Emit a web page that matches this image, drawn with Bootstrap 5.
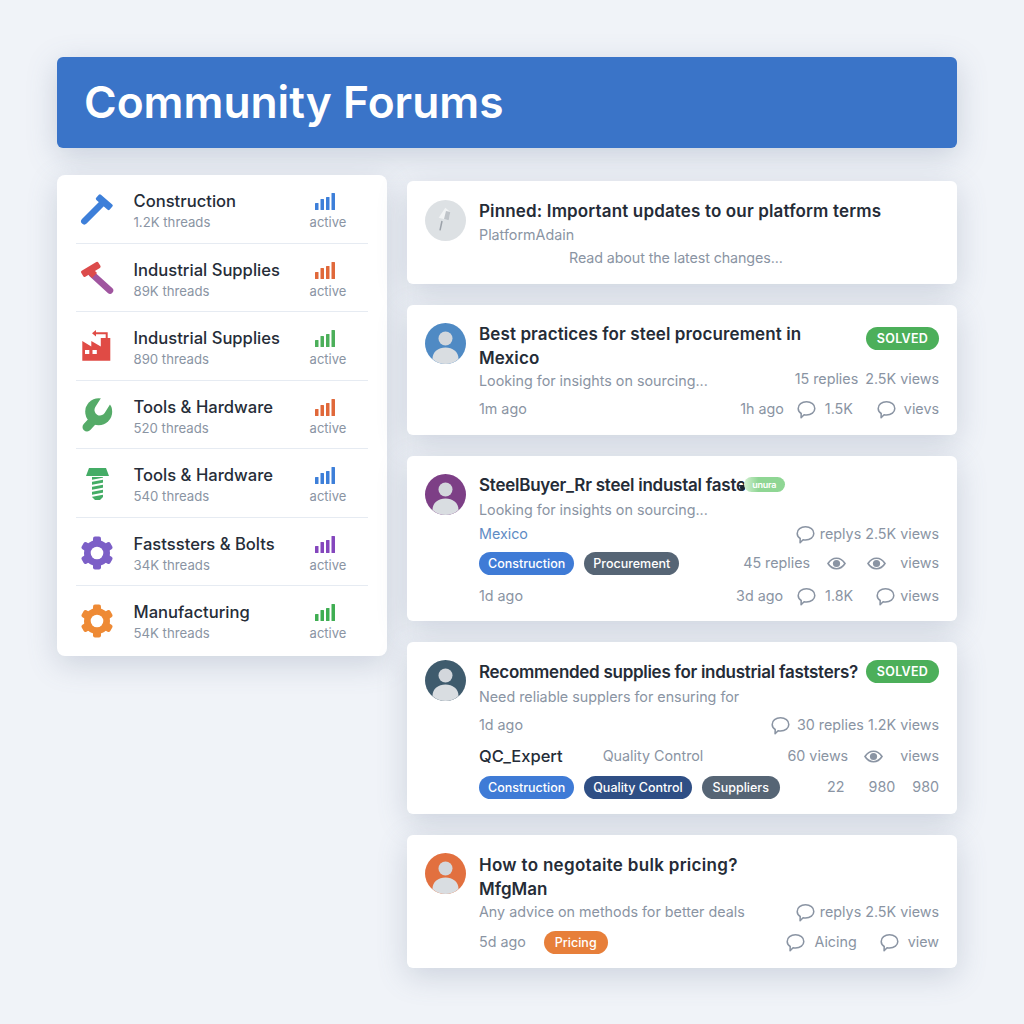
<!DOCTYPE html>
<html lang="en">
<head>
<meta charset="utf-8">
<title>Community Forums</title>
<link rel="stylesheet" href="https://cdn.jsdelivr.net/npm/bootstrap@5.3.0/dist/css/bootstrap.min.css">
<style>
body{background:#f0f3f8;font-family:Inter,"Liberation Sans",sans-serif;color:#8a94a3;min-height:1024px}
.shell{padding:57px 67px 0 57px;width:1024px}
.hero{height:91px;background:#3a74c8;border-radius:6px;box-shadow:0 8px 30px rgba(90,110,140,.26);padding-left:27px}
.hero h1{font-size:44.300px;font-weight:600;color:#fff;margin:0;line-height:91px}
.cols{margin-top:27px;gap:20px}
.side{width:330px;flex:none;height:481px;border:0;border-radius:8px;box-shadow:0 8px 30px rgba(90,110,140,.24);padding:0 19px}
.side .list-group-item{height:68.500px;padding:15px 0 0;display:flex;border-color:#e6ebf2;background:transparent;color:#8a94a3}
.ico{width:36px;height:36px;margin:2px 18.500px 0 3px;flex:none}
.nm{font-size:16.600px;font-weight:500;color:#262d38;line-height:22px}
.sb{font-size:13.200px;line-height:20px;color:#8a94a3}
.act{width:60px;margin:3px 10px 0 auto;text-align:center;font-size:13px;line-height:20px}
.act svg{display:block;margin:0 0 2px 17px;width:20px;height:17px}
.feed{width:550px;flex:none;margin-top:6px;gap:21px}
.post{border:0;border-radius:6px;box-shadow:0 8px 30px rgba(90,110,140,.24);padding:17px 18px 14px;flex-direction:row}
.pb13{padding-bottom:13px}.pb15{padding-bottom:15px}
.ava{width:41px;height:41px;flex:none;margin:1px 13px 0 0}
.ava.pin{margin-top:2px}
.tx{flex:1;min-width:0}
.rw{height:24px;display:flex;justify-content:space-between;align-items:center;font-size:14.300px;line-height:24px;white-space:nowrap}
.rt1{margin-top:1px}.rt4{margin-top:4px}.rt5{margin-top:5px}.rt6{margin-top:6px}.rt7{margin-top:7px}.rt9{margin-top:9px}.rtn{margin-top:-1px}
.ttl{font-size:17px;font-weight:600;color:#252c37;line-height:24px;white-space:nowrap}
.t-pin{letter-spacing:.15px}.t-best{letter-spacing:.1px}.t-rec{letter-spacing:-.28px}.t-how{letter-spacing:.3px}.t-steel{letter-spacing:-.25px}
.t-read{letter-spacing:-.1px}
.who{font-size:16.500px;font-weight:500;color:#252c37}
.tall{height:48px;align-items:flex-start}
.solved{background:#4caf5a;font-size:12.500px;font-weight:600;letter-spacing:.3px;padding:0;height:23px;line-height:23px;width:73px;border-radius:12px;margin-top:-1px}
.solved.low{margin-top:5px}
.pl{height:23px;line-height:23px;padding:0 9px;font-size:12.500px;font-weight:500;border-radius:12px}
.pl-w{padding:0 11px}
.pills{display:flex;gap:10px}
.b-blue{background:#3f7bd6}.b-slate{background:#566575}.b-navy{background:#2f4f85}.b-org{background:#e77f3a}
.cl{display:flex;align-items:center}
.cl svg{width:21px;height:21px;flex:none}
.cl svg.ey{width:19px;height:19px}
.g4{margin-left:4px}.g6{margin-left:6px}.g7{margin-left:7px}.g8{margin-left:8px}.g12{margin-left:12px}.g13{margin-left:13px}.g14{margin-left:14px}.g16{margin-left:16px}.g17{margin-left:17px}.g18{margin-left:18px}.g21{margin-left:21px}.g22{margin-left:22px}.g23{margin-left:23px}.g24{margin-left:24px}.g40{margin-left:40px}
.loc{color:#5f8cc4}
.off{margin-left:90px}
.mini{display:inline-block;height:15px;line-height:15px;width:41px;border-radius:8px;background:linear-gradient(90deg,#d4f0d2,#8fd694 35%);color:#fff;font-size:9px;text-align:center;vertical-align:3px}
.dot{display:inline-block;width:5px;height:5px;border-radius:50%;background:#1c2430;margin:0 -1px 0 -6px;vertical-align:1px}
</style>
</head>
<body>
<svg width="0" height="0" class="d-block position-absolute">
<defs>
<symbol id="bub" viewBox="0 0 19 19"><path d="M9.500 2.500c4.300 0 7.500 2.700 7.500 6s-3.200 6-7.500 6c-.8 0-1.500-.1-2.200-.3L4.600 17l.1-3.900C3 12 2 10.400 2 8.500c0-3.300 3.200-6 7.500-6z" fill="none" stroke="#8a94a3" stroke-width="1.400" stroke-linejoin="round"/></symbol>
<symbol id="eye" viewBox="0 0 19 19"><path d="M1 9.500C3.200 6 6 4.300 9.500 4.300S15.800 6 18 9.500c-2.200 3.500-5 5.200-8.500 5.200S3.200 13 1 9.500z" fill="none" stroke="#8a94a3" stroke-width="1.600"/><circle cx="9.500" cy="9.500" r="3.600" fill="#8a94a3"/></symbol>
<symbol id="gear" viewBox="0 0 36 36"><circle cx="18" cy="18" r="13"/><rect x="14" y="1.500" width="8" height="33" rx="2"/><rect x="14" y="1.500" width="8" height="33" rx="2" transform="rotate(60 18 18)"/><rect x="14" y="1.500" width="8" height="33" rx="2" transform="rotate(120 18 18)"/><circle cx="18" cy="18" r="6.300" fill="#fff"/></symbol>
<symbol id="bars" viewBox="0 0 20 17"><rect x="0" y="10" width="3.500" height="7" rx=".5"/><rect x="5.500" y="6" width="3.500" height="11" rx=".5"/><rect x="11" y="4" width="3.500" height="13" rx=".5"/><rect x="16.500" y="0" width="3.500" height="17" rx=".5"/></symbol>
<symbol id="who" viewBox="0 0 41 41"><circle cx="20.500" cy="15.500" r="7" fill="#d3d7dc"/><path d="M7.500 36c0-7.500 6-11.500 13-11.500S33.500 28.500 33.500 36c-3.500 3.300-8 5-13 5s-9.500-1.700-13-5z" fill="#d9dde1"/></symbol>
</defs>
</svg>

<div class="shell">
  <header class="hero"><h1>Community Forums</h1></header>
  <div class="d-flex cols align-items-start">
    <aside class="card side">
      <ul class="list-group list-group-flush">
        <li class="list-group-item">
          <svg class="ico" viewBox="0 0 36 36"><path d="M5.300 29.300 24 10.500" stroke="#3d7fd9" stroke-width="6.500" stroke-linecap="round"/><rect x="16.300" y="6.700" width="18" height="7" rx="1.500" fill="#3d7fd9" transform="rotate(41 25.300 10.200)"/></svg>
          <div><div class="nm">Construction</div><div class="sb">1.2K threads</div></div>
          <div class="act"><svg fill="#3d7fd9"><use href="#bars"/></svg>active</div>
        </li>
        <li class="list-group-item">
          <svg class="ico" viewBox="0 0 36 36"><path d="M12.700 12.800 31 29.500" stroke="#a0559f" stroke-width="6.500" stroke-linecap="round"/><rect x="1.800" y="4.800" width="20" height="7" rx="1.500" fill="#dc4b4b" transform="rotate(-31 11.800 8.300)"/><path d="M10 9 15.500 14.500" stroke="#dc4b4b" stroke-width="7"/></svg>
          <div><div class="nm">Industrial Supplies</div><div class="sb">89K threads</div></div>
          <div class="act"><svg fill="#e0683a"><use href="#bars"/></svg>active</div>
        </li>
        <li class="list-group-item">
          <svg class="ico" viewBox="0 0 36 36"><path d="M3.300 31.700V12l9 5.500V12l9.500 5.500V9h9.500v22.700z" fill="#e04b45"/><path d="M6 21h4.300v4H6zM13.500 21h4.300v4h-4.300z" fill="#fff"/><path d="M27.700 9V4.300H16" fill="none" stroke="#e04b45" stroke-width="2"/><path d="M17 1 13 4.300l4 3.300z" fill="#e04b45"/></svg>
          <div><div class="nm">Industrial Supplies</div><div class="sb">890 threads</div></div>
          <div class="act"><svg fill="#4caf5a"><use href="#bars"/></svg>active</div>
        </li>
        <li class="list-group-item">
          <svg class="ico" viewBox="0 0 36 36"><path d="M8 29 20 16" stroke="#55ab68" stroke-width="9" stroke-linecap="round"/><circle cx="19.700" cy="13.700" r="13.500" fill="#55ab68"/><path d="M21 12 31 -4" stroke="#fff" stroke-width="11" stroke-linecap="round"/></svg>
          <div><div class="nm">Tools &amp; Hardware</div><div class="sb">520 threads</div></div>
          <div class="act"><svg fill="#e0683a"><use href="#bars"/></svg>active</div>
        </li>
        <li class="list-group-item">
          <svg class="ico" viewBox="0 0 36 36"><path d="M10 2h17l3 8H7z" fill="#44ac66"/><path d="M13 11h11v20l-3 3h-5l-3-3z" fill="#44ac66"/><path d="M12 15 25 12.500M12 20 25 17.500M12 25 25 22.500M12 30 25 27.500" stroke="#fff" stroke-width="1.800"/></svg>
          <div><div class="nm">Tools &amp; Hardware</div><div class="sb">540 threads</div></div>
          <div class="act"><svg fill="#3d7fd9"><use href="#bars"/></svg>active</div>
        </li>
        <li class="list-group-item">
          <svg class="ico" fill="#7c5fc7"><use href="#gear"/></svg>
          <div><div class="nm">Fastssters &amp; Bolts</div><div class="sb">34K threads</div></div>
          <div class="act"><svg fill="#8446bd"><use href="#bars"/></svg>active</div>
        </li>
        <li class="list-group-item">
          <svg class="ico" fill="#ee8a35"><use href="#gear"/></svg>
          <div><div class="nm">Manufacturing</div><div class="sb">54K threads</div></div>
          <div class="act"><svg fill="#3fae52"><use href="#bars"/></svg>active</div>
        </li>
      </ul>
    </aside>

    <main class="d-flex flex-column feed">
      <article class="card post">
        <svg class="ava pin" viewBox="0 0 41 41"><circle cx="20.500" cy="20.500" r="20.500" fill="#dde1e4"/><path d="M20.300 7.700 25.300 12 23.700 20.300 13.700 17.700z" fill="#f1f3f4"/><path d="M25.300 12 23.700 20.300 19 19 21 11z" fill="#bfc4c9"/><path d="M17 21 15 30.300" stroke="#9ba1a9" stroke-width="1.500"/></svg>
        <div class="tx">
          <div class="rw rt1"><span class="ttl t-pin">Pinned: Important updates to our platform terms</span></div>
          <div class="rw"><span>PlatformAdain</span></div>
          <div class="rw rtn"><span class="off t-read">Read about the latest changes...</span></div>
        </div>
      </article>

      <article class="card post">
        <svg class="ava" viewBox="0 0 41 41"><circle cx="20.500" cy="20.500" r="20.500" fill="#4f8ac4"/><use href="#who"/></svg>
        <div class="tx">
          <div class="rw tall"><span class="ttl t-best">Best practices for steel procurement in<br>Mexico</span><span class="badge solved low">SOLVED</span></div>
          <div class="rw rtn"><span>Looking for insights on sourcing...</span><span class="cl mb-1">15 replies<span class="g7">2.5K views</span></span></div>
          <div class="rw rt4"><span>1m ago</span><span class="cl">1h ago<svg class="g12"><use href="#bub"/></svg><span class="g8">1.5K</span><svg class="g23"><use href="#bub"/></svg><span class="g7">vievs</span></span></div>
        </div>
      </article>

      <article class="card post pb13">
        <svg class="ava" viewBox="0 0 41 41"><circle cx="20.500" cy="20.500" r="20.500" fill="#7d3f86"/><use href="#who"/></svg>
        <div class="tx">
          <div class="rw"><span class="ttl t-steel">SteelBuyer_Rr steel industal faste<span class="dot"></span><span class="mini">unura</span></span></div>
          <div class="rw rt1"><span>Looking for insights on sourcing...</span></div>
          <div class="rw"><span class="loc">Mexico</span><span class="cl"><svg><use href="#bub"/></svg><span class="g4">replys 2.5K views</span></span></div>
          <div class="rw rt5"><span class="pills"><span class="badge pl b-blue">Construction</span><span class="badge pl b-slate">Procurement</span></span><span class="cl">45 replies<svg class="ey g17"><use href="#eye"/></svg><svg class="ey g21"><use href="#eye"/></svg><span class="g14">views</span></span></div>
          <div class="rw rt9"><span>1d ago</span><span class="cl">3d ago<svg class="g13"><use href="#bub"/></svg><span class="g8">1.8K</span><svg class="g22"><use href="#bub"/></svg><span class="g4">views</span></span></div>
        </div>
      </article>

      <article class="card post pb15">
        <svg class="ava" viewBox="0 0 41 41"><circle cx="20.500" cy="20.500" r="20.500" fill="#3f5b6d"/><use href="#who"/></svg>
        <div class="tx">
          <div class="rw rt1"><span class="ttl t-rec">Recommended supplies for industrial faststers?</span><span class="badge solved">SOLVED</span></div>
          <div class="rw rt1"><span>Need reliable supplers for ensuring for</span></div>
          <div class="rw rt4"><span>1d ago</span><span class="cl"><svg><use href="#bub"/></svg><span class="g6">30 replies 1.2K views</span></span></div>
          <div class="rw rt7"><span class="d-flex align-items-center"><span class="who">QC_Expert</span><span class="g40">Quality Control</span></span><span class="cl">60 views<svg class="ey g16"><use href="#eye"/></svg><span class="g17">views</span></span></div>
          <div class="rw rt7"><span class="pills"><span class="badge pl b-blue">Construction</span><span class="badge pl b-navy">Quality Control</span><span class="badge pl pl-w b-slate">Suppliers</span></span><span class="cl">22<span class="g24">980</span><span class="g17">980</span></span></div>
        </div>
      </article>

      <article class="card post">
        <svg class="ava" viewBox="0 0 41 41"><circle cx="20.500" cy="20.500" r="20.500" fill="#e2703f"/><use href="#who"/></svg>
        <div class="tx">
          <div class="rw rt1"><span class="ttl t-how">How to negotaite bulk pricing?</span></div>
          <div class="rw"><span class="ttl">MfgMan</span></div>
          <div class="rw rtn"><span>Any advice on methods for better deals</span><span class="cl"><svg><use href="#bub"/></svg><span class="g4">replys 2.5K views</span></span></div>
          <div class="rw rt6"><span class="d-flex align-items-center">5d ago<span class="badge pl pl-w b-org g18">Pricing</span></span><span class="cl"><svg><use href="#bub"/></svg><span class="g8">Aicing</span><svg class="g22"><use href="#bub"/></svg><span class="g8">view</span></span></div>
        </div>
      </article>
    </main>
  </div>
</div>
<script src="https://cdn.jsdelivr.net/npm/bootstrap@5.3.0/dist/js/bootstrap.bundle.min.js"></script>
</body>
</html>
